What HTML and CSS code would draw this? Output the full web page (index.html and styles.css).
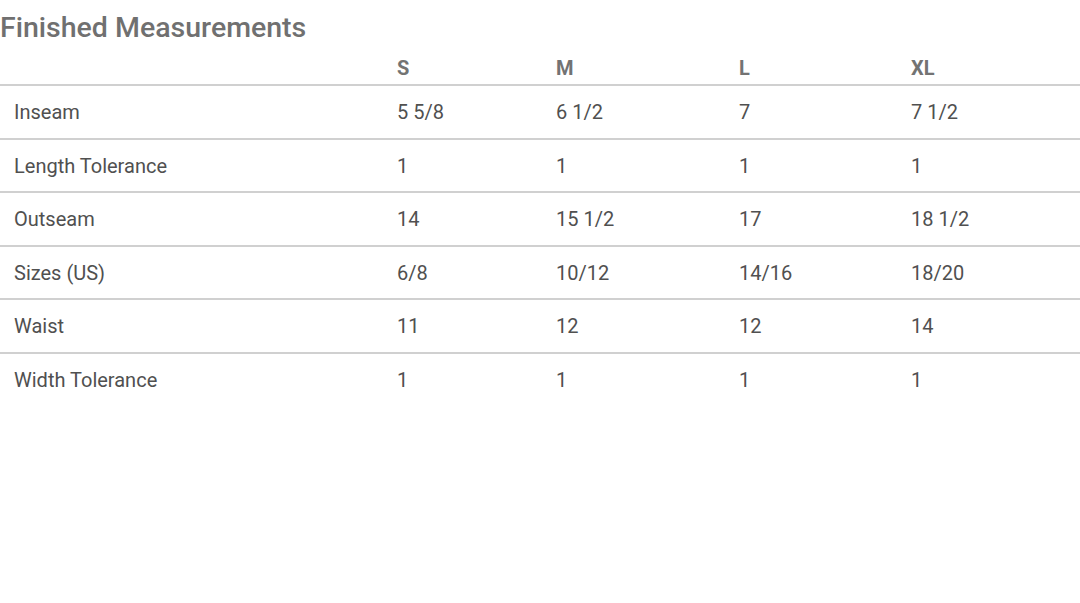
FILE: index.html
```html
<!DOCTYPE html>
<html>
<head>
<meta charset="utf-8">
<link rel="stylesheet" href="styles.css">
</head>
<body>
<h2 class="title">Finished Measurements</h2>
<table class="sizes">
  <colgroup>
    <col class="c-label"><col class="c-s"><col class="c-m"><col class="c-l"><col class="c-xl">
  </colgroup>
  <thead>
    <tr><th></th><th>S</th><th>M</th><th>L</th><th>XL</th></tr>
  </thead>
  <tbody>
    <tr><td>Inseam</td><td>5 5/8</td><td>6 1/2</td><td>7</td><td>7 1/2</td></tr>
    <tr><td>Length Tolerance</td><td>1</td><td>1</td><td>1</td><td>1</td></tr>
    <tr><td>Outseam</td><td>14</td><td>15 1/2</td><td>17</td><td>18 1/2</td></tr>
    <tr><td>Sizes (US)</td><td>6/8</td><td>10/12</td><td>14/16</td><td>18/20</td></tr>
    <tr><td>Waist</td><td>11</td><td>12</td><td>12</td><td>14</td></tr>
    <tr><td>Width Tolerance</td><td>1</td><td>1</td><td>1</td><td>1</td></tr>
  </tbody>
</table>
</body>
</html>
```
FILE: styles.css
```css
html, body {
  margin: 0;
  padding: 0;
  background: #fff;
  font-family: Roboto, "Liberation Sans", sans-serif;
}
.title {
  margin: 0;
  padding-top: 12px;
  font-size: 28.5px;
  line-height: 31px;
  font-weight: 500;
  color: #707070;
}
.sizes {
  width: 1080px;
  border-collapse: collapse;
  table-layout: fixed;
}
.c-label { width: 383px; }
.c-s { width: 159px; }
.c-m { width: 183px; }
.c-l { width: 172px; }
.c-xl { width: 183px; }
.sizes th {
  text-align: left;
  font-size: 20px;
  font-weight: 700;
  color: #737373;
  padding: 11px 14px 2px;
  line-height: 28px;
  border-bottom: 2px solid #d0d0d0;
}
.sizes td {
  font-size: 20px;
  color: #505050;
  padding: 12px 14px 11.5px;
  line-height: 28px;
  border-bottom: 2px solid #d0d0d0;
}
.sizes tbody tr:last-child td {
  border-bottom: none;
}
```
